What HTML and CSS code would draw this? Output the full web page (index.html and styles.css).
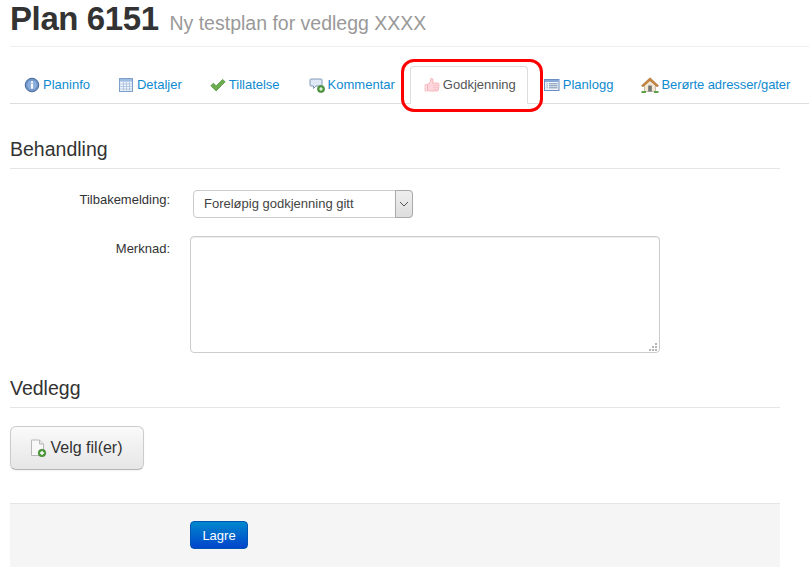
FILE: index.html
```html
<!DOCTYPE html>
<html lang="no">
<head>
<meta charset="utf-8">
<title>Plan 6151</title>
<link rel="stylesheet" href="styles.css">
</head>
<body>
<header class="page-header">
  <h1 class="title">Plan 6151 <small class="subtitle">Ny testplan for vedlegg XXXX</small></h1>
</header>
<nav class="tabs">
  <a class="tab" href="#"><svg class="icon" viewBox="0 0 16 16"><circle cx="8" cy="8" r="6.8" fill="#6f94c8" stroke="#4a6a9c"/><circle cx="8" cy="8" r="4.6" fill="#8fb0dc"/><rect x="7" y="7" width="2" height="4.6" fill="#fff"/><rect x="7" y="4.4" width="2" height="1.8" fill="#fff"/></svg>Planinfo</a>
  <a class="tab" href="#"><svg class="icon" viewBox="0 0 16 16"><rect x="1.5" y="1.5" width="13" height="13" fill="#eef3fa" stroke="#7f9fcb"/><rect x="2" y="2" width="12" height="2.6" fill="#9fbce2"/><path d="M2 7h12M2 9.500h12M2 12h12M5.500 4.500v10M8.500 4.500v10M11.500 4.500v10" stroke="#a9c0de" stroke-width=".8" fill="none"/></svg>Detaljer</a>
  <a class="tab" href="#"><svg class="icon" viewBox="0 0 16 16"><path d="M.8 8.700l2.700-2.500 2.700 2.700L12.600 2.400l2.600 2.400-9 9.100z" fill="#6cad4e" stroke="#4d8a3c" stroke-width=".7"/></svg>Tillatelse</a>
  <a class="tab tab-comment" href="#"><svg class="icon" viewBox="0 0 16 16"><path d="M2 2h10a1 1 0 0 1 1 1v5a1 1 0 0 1-1 1H7L4.500 11.500V9H2a1 1 0 0 1-1-1V3a1 1 0 0 1 1-1z" fill="#dfe9f6" stroke="#8298b8"/><circle cx="12" cy="12" r="3.600" fill="#4f9a3c" stroke="#3a7a2c" stroke-width=".6"/><path d="M10.200 12h3.600M12 10.200v3.600" stroke="#fff" stroke-width="1.200"/></svg>Kommentar</a>
  <a class="tab tab-active" href="#"><svg class="icon" viewBox="0 0 16 16"><path d="M1 7.500h2.500v6.500H1z" fill="#fde3e5" stroke="#f4b6bd" stroke-width=".8"/><path d="M3.500 7.500L6.300 5 6.800 1.500c1.500-.6 2.600.8 2.200 2.500L8.600 6h4.900c1 0 1.600.8 1.500 1.700l-.6 5.100c-.1.800-.7 1.200-1.400 1.200H5.500L3.500 13.200z" fill="#ffd6db" stroke="#f4a9b3" stroke-width=".8"/><path d="M9 8.500h5M9 10.500h5M9 12.400h4.500" stroke="#f8bcc4" stroke-width=".7"/></svg>Godkjenning</a>
  <a class="tab" href="#"><svg class="icon icon-log" viewBox="0 0 16 16"><rect x="1" y="2.500" width="14.500" height="11" fill="#eef3fa" stroke="#6c8fc0"/><rect x="1.500" y="3" width="13.500" height="2" fill="#87a8d8"/><path d="M3 6.800h1.200M3 8.800h1.200M3 10.800h1.200M5.500 6.800H14M5.500 8.800H14M5.500 10.800H14" stroke="#7a90ad"/></svg>Planlogg</a>
  <a class="tab tab-address" href="#"><svg class="icon icon-house" viewBox="0 0 18 16"><path d="M3.500 14.500V7.500L9 3l5.500 4.500v7z" fill="#f2e8d2" stroke="#a89a80" stroke-width=".6"/><path d="M.5 8.700L9 .8l8.500 7.900-1.500 1L9 3.600 2 9.700z" fill="#d0873a" stroke="#94602a" stroke-width=".6"/><rect x="7.200" y="8.500" width="3.600" height="6" fill="#767676"/><path d="M.5 15h4.500M13 15h4.500" stroke="#5fa04a" stroke-width="1.800"/></svg>Berørte adresser/gater</a>
</nav>
<main class="content">
  <h2 class="section-title section-first">Behandling</h2>
  <form class="form">
    <div class="form-row">
      <label class="form-label" for="tilbakemelding">Tilbakemelding:</label>
      <div class="select-wrap">
        <select class="select" id="tilbakemelding"><option>Foreløpig godkjenning gitt</option></select>
        <span class="select-arrow"><svg viewBox="0 0 10 6" class="chevron"><path d="M1 1l4 4 4-4" fill="none" stroke="#555" stroke-width="1"/></svg></span>
      </div>
    </div>
    <div class="form-row form-row-text">
      <label class="form-label form-label-text" for="merknad">Merknad:</label>
      <div class="textarea-wrap">
        <textarea class="textarea" id="merknad"></textarea>
        <svg class="grip" viewBox="0 0 9 9"><path d="M6 0h2v2H6zM3 3h2v2H3zM6 3h2v2H6zM0 6h2v2H0zM3 6h2v2H3zM6 6h2v2H6z" fill="#b5b5b5"/></svg>
      </div>
    </div>
    <h2 class="section-title section-attach">Vedlegg</h2>
    <button type="button" class="btn-file"><svg class="icon-file" viewBox="0 0 18 18"><path d="M2.500 1h8l4 4v11.500h-12z" fill="#f8f8f8" stroke="#b8b8b8"/><path d="M10.500 1v4h4" fill="#e8e8e8" stroke="#b8b8b8"/><circle cx="13" cy="14" r="3.800" fill="#4f9a3c" stroke="#3a7a2c" stroke-width=".6"/><path d="M11 14h4M13 12v4" stroke="#fff" stroke-width="1.300"/></svg>Velg fil(er)</button>
    <div class="form-actions">
      <button type="button" class="btn-primary">Lagre</button>
    </div>
  </form>
</main>
<div class="highlight" aria-hidden="true"></div>
</body>
</html>
```
FILE: styles.css
```css
* { box-sizing: border-box; }
html, body { margin: 0; padding: 0; }
body {
  position: relative;
  width: 809px;
  height: 568px;
  overflow: hidden;
  background: #fff;
  color: #333;
  font-family: "Liberation Sans", Arial, sans-serif;
  font-size: 13px;
  line-height: 20px;
}
.page-header {
  margin: 0 0 0 10px;
  height: 47px;
  border-bottom: 1px solid #eee;
}
.title {
  margin: 0;
  font-size: 33px;
  line-height: 38px;
  letter-spacing: -.4px;
  font-weight: bold;
  color: #333;
}
.subtitle {
  margin-left: 2px;
  font-size: 19.5px;
  letter-spacing: 0;
  font-weight: normal;
  color: #999;
}
.tabs {
  display: flex;
  margin: 19px 0 0 10px;
  height: 38px;
  border-bottom: 1px solid #ddd;
}
.tab {
  display: flex;
  align-items: center;
  height: 38px;
  padding: 0 14px;
  color: #0e8ad0;
  text-decoration: none;
  white-space: nowrap;
}
.tab-comment {
  margin-left: 1px;
}
.tab-active {
  color: #555;
  background: #fff;
  border: 1px solid #ddd;
  border-bottom-color: #fff;
  border-radius: 4px 4px 0 0;
  padding: 0 11px 0 13px;
  margin: 0 1px;
}
.tab-address {
  letter-spacing: -.09px;
}
.icon {
  width: 16px;
  height: 16px;
  margin-right: 3px;
  flex: none;
}
.icon-log {
  width: 17px;
}
.icon-house {
  width: 18px;
  margin-right: 2px;
}
.content {
  margin: 0 29px 0 10px;
}
.section-title {
  margin: 0 0 21px;
  padding-bottom: 7px;
  font-size: 19.5px;
  line-height: 24px;
  font-weight: normal;
  color: #333;
  border-bottom: 1px solid #e5e5e5;
  height: 32px;
}
.section-first {
  margin-top: 33px;
}
.section-attach {
  margin-bottom: 18px;
}
.form-row {
  display: grid;
  grid-template-columns: 160px 1fr;
  column-gap: 20px;
  align-items: start;
}
.form-row-text {
  margin-top: 18px;
  margin-bottom: 23px;
}
.form-label {
  text-align: right;
  font-size: 13px;
  line-height: 20px;
  color: #333;
}
.form-label-text {
  margin-top: 3px;
}
.select-wrap {
  position: relative;
  width: 220px;
  height: 28px;
  margin-left: 3px;
}
.select {
  display: block;
  width: 100%;
  height: 100%;
  padding: 0 24px 2px 10px;
  appearance: none;
  -webkit-appearance: none;
  background: #fff;
  border: 1px solid #ccc;
  border-radius: 4px;
  color: #444;
  font-family: inherit;
  font-size: 13px;
}
.select-arrow {
  position: absolute;
  top: 0;
  right: 0;
  bottom: 0;
  width: 18px;
  display: flex;
  align-items: center;
  justify-content: center;
  background: linear-gradient(#eeeeee, #dedede);
  border: 1px solid #aaa;
  border-radius: 0 4px 4px 0;
}
.chevron {
  width: 10px;
  height: 6px;
}
.textarea-wrap {
  position: relative;
  width: 470px;
  height: 117px;
}
.textarea {
  display: block;
  width: 100%;
  height: 100%;
  resize: none;
  background: #fff;
  border: 1px solid #ccc;
  border-radius: 4px;
  box-shadow: inset 0 1px 1px rgba(0, 0, 0, .075);
}
.grip {
  position: absolute;
  right: 2px;
  bottom: 1px;
  width: 9px;
  height: 9px;
}
.btn-file {
  display: flex;
  align-items: center;
  justify-content: center;
  width: 134px;
  height: 44px;
  padding: 0 2px 0 0;
  background: linear-gradient(#fafafa, #e6e6e6);
  border: 1px solid #ccc;
  border-bottom-color: #b3b3b3;
  border-radius: 6px;
  color: #333;
  font-family: inherit;
  font-size: 16px;
  box-shadow: 0 1px 2px rgba(0, 0, 0, .05);
}
.icon-file {
  width: 18px;
  height: 18px;
  margin-right: 3px;
}
.form-actions {
  margin-top: 33px;
  height: 64px;
  padding: 17px 0 0 180px;
  background: #f5f5f5;
  border-top: 1px solid #e5e5e5;
}
.btn-primary {
  display: block;
  width: 58px;
  height: 28px;
  padding: 0;
  background: linear-gradient(#0088cc, #0044cc);
  border: 1px solid #0055b3;
  border-radius: 4px;
  color: #fff;
  font-family: inherit;
  font-size: 13px;
}
.highlight {
  position: absolute;
  left: 401px;
  top: 59px;
  width: 142px;
  height: 53px;
  border: 3px solid #f00;
  border-radius: 13px;
  pointer-events: none;
}
```
